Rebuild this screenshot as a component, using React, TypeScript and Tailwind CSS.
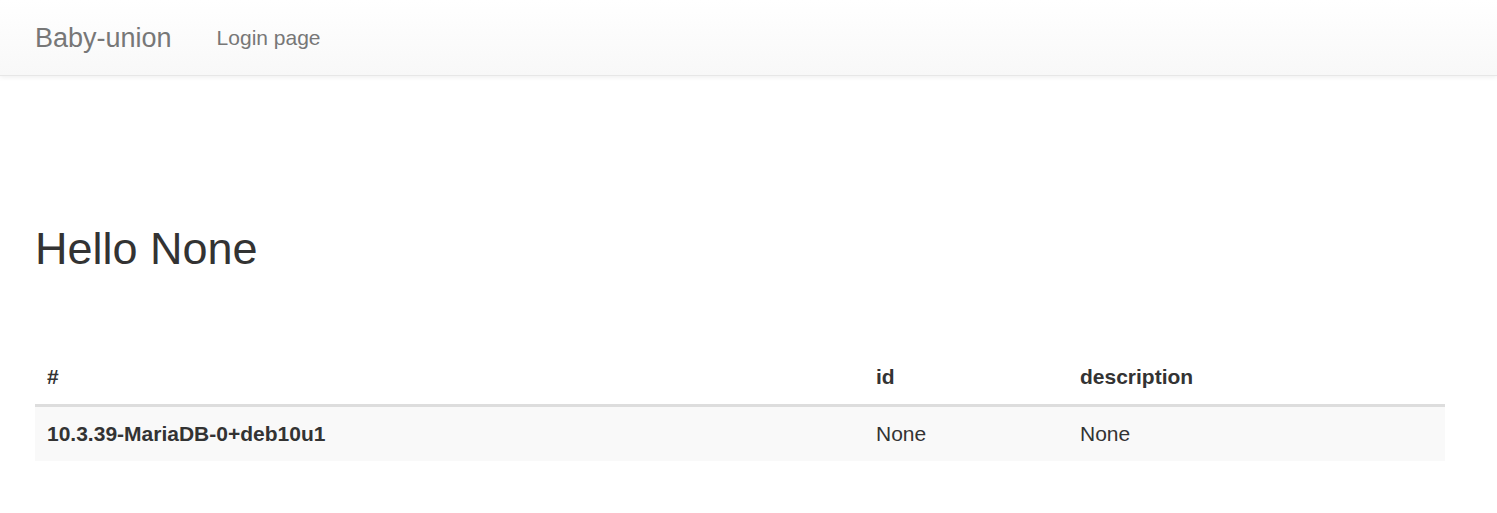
import React from 'react';

const rows = [{ version: '10.3.39-MariaDB-0+deb10u1', id: 'None', description: 'None' }];

export default function App() {
  return (
    <div className="min-h-screen bg-white text-[#333] font-['Liberation_Sans',Arial,sans-serif]">
      {/* navbar */}
      <nav className="h-[76px] pt-[1px] flex items-center border-b border-[#e7e7e7] bg-gradient-to-b from-white to-[#f8f8f8] shadow-[inset_0_1px_0_rgba(255,255,255,0.15),0_1px_5px_rgba(0,0,0,0.075)]">
        <a className="ml-[35px] text-[27px] leading-[30px] text-[#777]">Baby-union</a>
        <a className="ml-[45px] text-[21px] leading-[30px] text-[#777]">Login page</a>
      </nav>

      <div className="pl-[35px] pr-[52px]">
        <h2 className="mt-[148px] text-[45px] leading-[49.5px] font-normal">Hello None</h2>

        <table className="mt-[76px] w-full border-collapse text-[21px] leading-[30px]">
          <thead>
            <tr className="border-b-[3px] border-[#ddd]">
              <th className="w-[829px] px-[12px] pt-[12px] pb-[12px] text-left font-bold">#</th>
              <th className="w-[204px] px-[12px] pt-[12px] pb-[12px] text-left font-bold">id</th>
              <th className="px-[12px] pt-[12px] pb-[12px] text-left font-bold">description</th>
            </tr>
          </thead>
          <tbody>
            {rows.map((r) => (
              <tr key={r.version} className="bg-[#f9f9f9]">
                <th className="px-[12px] py-[12px] text-left font-bold">{r.version}</th>
                <td className="px-[12px] py-[12px]">{r.id}</td>
                <td className="px-[12px] py-[12px]">{r.description}</td>
              </tr>
            ))}
          </tbody>
        </table>
      </div>
    </div>
  );
}
